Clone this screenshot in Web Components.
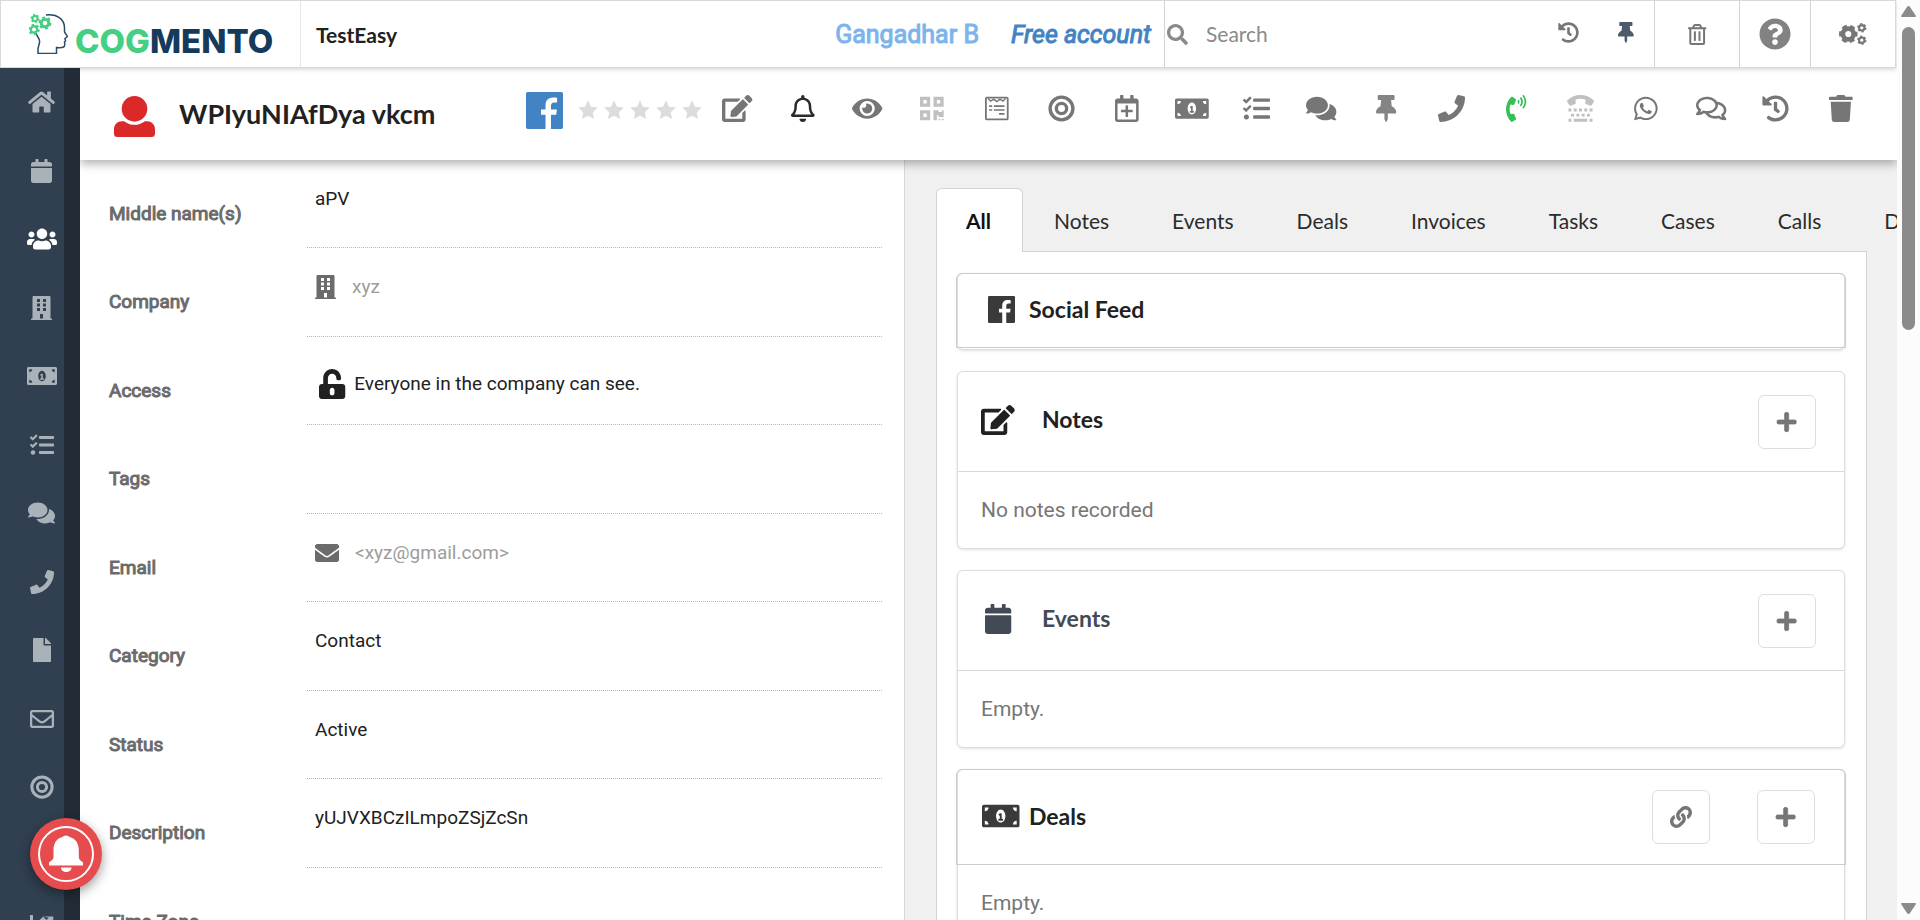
<!DOCTYPE html>
<html lang="en">
<head>
<meta charset="utf-8">
<title>Cogmento CRM</title>
<style>
html, body { margin: 0; height: 100%; overflow: hidden; }
body { font-family: Lato, "Noto Sans", sans-serif; font-size: 21px; color: #212121; background: #fff; }
</style>
</head>
<body>
<crm-app></crm-app>

<script>
const ICONS = {
  home: [576, '<path d="M280.37 148.26L96 300.11V464a16 16 0 0 0 16 16l112.06-.29a16 16 0 0 0 15.92-16V368a16 16 0 0 1 16-16h64a16 16 0 0 1 16 16v95.64a16 16 0 0 0 16 16.05L464 480a16 16 0 0 0 16-16V300L295.67 148.26a12.19 12.19 0 0 0-15.3 0zM571.6 251.47L488 182.56V44.05a12 12 0 0 0-12-12h-56a12 12 0 0 0-12 12v72.61L318.47 43a48 48 0 0 0-61 0L4.34 251.47a12 12 0 0 0-1.6 16.9l25.5 31A12 12 0 0 0 45.15 301l235.22-193.74a12.19 12.19 0 0 1 15.3 0L530.9 301a12 12 0 0 0 16.9-1.6l25.5-31a12 12 0 0 0-1.7-16.93z"/>'],
  calendar: [448, '<path d="M12 192h424c6.600 0 12 5.400 12 12v260c0 26.500-21.500 48-48 48H48c-26.500 0-48-21.500-48-48V204c0-6.600 5.400-12 12-12zm436-44v-36c0-26.500-21.500-48-48-48h-48V12c0-6.600-5.400-12-12-12h-40c-6.600 0-12 5.400-12 12v52H160V12c0-6.600-5.400-12-12-12h-40c-6.600 0-12 5.400-12 12v52H48C21.500 64 0 85.500 0 112v36c0 6.600 5.400 12 12 12h424c6.600 0 12-5.400 12-12z"/>'],
  users: [640, '<path d="M96 224c35.3 0 64-28.7 64-64s-28.7-64-64-64-64 28.7-64 64 28.7 64 64 64zm448 0c35.3 0 64-28.7 64-64s-28.7-64-64-64-64 28.7-64 64 28.7 64 64 64zm32 32h-64c-17.6 0-33.5 7.1-45.1 18.6 40.3 22.1 68.9 62 75.1 109.4h66c17.7 0 32-14.3 32-32v-32c0-35.3-28.7-64-64-64zm-256 0c61.9 0 112-50.1 112-112S381.9 32 320 32 208 82.1 208 144s50.1 112 112 112zm76.8 32h-8.3c-20.8 10-43.9 16-68.5 16s-47.6-6-68.5-16h-8.3C179.600 288 128 339.600 128 403.200V432c0 26.500 21.500 48 48 48h288c26.500 0 48-21.500 48-48v-28.800c0-63.600-51.600-115.200-115.200-115.200zm-223.700-13.400C161.500 263.100 145.600 256 128 256H64c-35.300 0-64 28.700-64 64v32c0 17.700 14.300 32 32 32h65.900c6.300-47.400 34.900-87.300 75.200-109.400z"/>'],
  building: [448, '<path fill-rule="evenodd" d="M436 480h-20V24c0-13-11-24-24-24H56C43 0 32 11 32 24v456H12c-7 0-12 5-12 12v20h448v-20c0-7-5-12-12-12zM128 64h64v64h-64zM256 64h64v64h-64zM128 160h64v64h-64zM256 160h64v64h-64zM128 256h64v64h-64zM256 256h64v64h-64zM192 384h64v96h-64z"/>'],
  money: [640, '<path d="M352 304h-16v-88c0-4.420-3.580-8-8-8h-13.580c-4.740 0-9.370 1.400-13.310 4.030l-15.330 10.220a7.994 7.994 0 0 0-2.220 11.090l8.880 13.310a7.994 7.994 0 0 0 11.090 2.220l.47-.31V304h-16c-4.420 0-8 3.580-8 8v16c0 4.420 3.580 8 8 8h64c4.420 0 8-3.580 8-8v-16c0-4.420-3.580-8-8-8zM608 64H32C14.330 64 0 78.330 0 96v320c0 17.670 14.330 32 32 32h576c17.670 0 32-14.330 32-32V96c0-17.670-14.330-32-32-32zM48 400v-64c35.350 0 64 28.650 64 64H48zm0-224v-64h64c0 35.350-28.650 64-64 64zm272 192c-44.190 0-80-50.150-80-112 0-61.860 35.820-112 80-112s80 50.130 80 112c0 61.870-35.830 112-80 112zm272 32h-64c0-35.350 28.650-64 64-64v64zm0-224c-35.350 0-64-28.650-64-64h64v64z"/>'],
  tasks: [512, '<path d="M139.61 35.500a12 12 0 0 0-17 0L58.930 98.810l-22.700-22.120a12 12 0 0 0-17 0L3.530 92.410a12 12 0 0 0 0 17l47.590 47.400a12.780 12.780 0 0 0 17.610 0l15.590-15.620L156.520 69a12.090 12.090 0 0 0 .09-17zm0 159.190a12 12 0 0 0-17 0l-63.680 63.720-22.700-22.100a12 12 0 0 0-17 0L3.530 252a12 12 0 0 0 0 17L51 316.500a12.770 12.770 0 0 0 17.600 0l15.700-15.690 72.200-72.220a12 12 0 0 0 .09-16.900zM64 368c-26.490 0-48.590 21.500-48.590 48S37.530 464 64 464a48 48 0 0 0 0-96zm432 16H208a16 16 0 0 0-16 16v32a16 16 0 0 0 16 16h288a16 16 0 0 0 16-16v-32a16 16 0 0 0-16-16zm0-320H208a16 16 0 0 0-16 16v32a16 16 0 0 0 16 16h288a16 16 0 0 0 16-16V80a16 16 0 0 0-16-16zm0 160H208a16 16 0 0 0-16 16v32a16 16 0 0 0 16 16h288a16 16 0 0 0 16-16v-32a16 16 0 0 0-16-16z"/>'],
  comments: [576, '<path d="M416 192c0-88.400-93.100-160-208-160S0 103.600 0 192c0 34.300 14.100 65.900 38 92-13.400 30.200-35.500 54.200-35.800 54.500-2.200 2.300-2.800 5.700-1.500 8.700S4.800 352 8 352c36.600 0 66.900-12.300 88.700-25 32.200 15.700 70.300 25 111.300 25 114.900 0 208-71.600 208-160zm122 220c23.900-26 38-57.700 38-92 0-66.900-53.500-124.200-129.300-148.100.9 6.600 1.300 13.300 1.300 20.100 0 105.900-107.700 192-240 192-10.800 0-21.300-.8-31.700-1.900C207.800 439.600 281.800 480 368 480c41 0 79.100-9.200 111.300-25 21.800 12.700 52.100 25 88.700 25 3.200 0 6.100-1.900 7.300-4.800 1.300-2.900.7-6.300-1.500-8.700-.3-.3-22.400-24.200-35.800-54.500z"/>'],
  commentsOutline: [576, '<path d="M532 386.200c27.500-27.100 44-61.100 44-98.200 0-80-76.500-146.100-176.200-157.900C368.300 72.500 294.300 32 208 32 93.100 32 0 103.600 0 192c0 37 16.500 71 44 98.200-15.300 30.700-37.300 54.500-37.700 54.900-6.300 6.700-8.100 16.500-4.400 25 3.600 8.500 12 14 21.200 14 53.500 0 96.700-20.200 125.200-38.800 9.200 2.100 18.700 3.700 28.400 4.900C208.100 407.600 281.800 448 368 448c20.800 0 40.800-2.400 59.800-6.800C456.300 459.700 499.400 480 553 480c9.200 0 17.500-5.500 21.200-14 3.600-8.500 1.900-18.300-4.400-25-.4-.3-22.500-24.100-37.800-54.800zm-392.800-92.300L122.100 305c-14.100 9.100-28.500 16.300-43.100 21.400 2.700-4.700 5.400-9.700 8-14.800l15.500-31.100L77.700 256C64.200 242.600 48 220.700 48 192c0-60.700 73.300-112 160-112s160 51.300 160 112-73.300 112-160 112c-16.500 0-33-1.900-49-5.600l-19.800-4.500zM498.300 352l-24.700 24.400 15.500 31.100c2.600 5.100 5.300 10.100 8 14.800-14.600-5.100-29-12.300-43.100-21.400l-17.100-11.100-19.900 4.600c-16 3.700-32.500 5.600-49 5.600-54 0-102.200-20.100-131.300-49.700C338 339.500 416 272.900 416 192c0-3.400-.4-6.700-.7-10C479.700 196.500 528 238.800 528 288c0 28.700-16.200 50.600-29.700 64z"/>'],
  phone: [512, '<path d="M493.400 24.600l-104-24c-11.300-2.600-22.900 3.300-27.500 13.900l-48 112c-4.200 9.800-1.400 21.300 6.900 28l60.600 49.600c-36 76.700-98.900 140.500-177.200 177.200l-49.600-60.600c-6.800-8.300-18.200-11.100-28-6.900l-112 48C3.900 366.500-2 378.100.6 389.400l24 104C27.100 504.200 36.700 512 48 512c256.100 0 464-207.500 464-464 0-11.200-7.700-20.900-18.600-23.400z"/>'],
  file: [384, '<path d="M224 136V0H24C10.700 0 0 10.700 0 24v464c0 13.300 10.700 24 24 24h336c13.300 0 24-10.700 24-24V160H248c-13.200 0-24-10.800-24-24zm160-14.100v6.100H256V0h6.100c6.400 0 12.500 2.500 17 7l97.900 98c4.500 4.500 7 10.600 7 16.900z"/>'],
  envelopeOutline: [512, '<path d="M464 64H48C21.490 64 0 85.490 0 112v288c0 26.510 21.490 48 48 48h416c26.510 0 48-21.490 48-48V112c0-26.510-21.490-48-48-48zm0 48v40.805c-22.422 18.259-58.168 46.651-134.587 106.490-16.841 13.247-50.201 45.072-73.413 44.701-23.208.375-56.579-31.459-73.413-44.701C106.180 199.465 70.425 171.067 48 152.805V112h416zM48 400V214.398c22.914 18.251 55.409 43.862 104.938 82.646 21.857 17.205 60.134 55.186 103.062 54.955 42.717.231 80.509-37.199 103.053-54.947 49.528-38.783 82.032-64.401 104.947-82.653V400H48z"/>'],
  envelope: [512, '<path d="M502.300 190.800c3.900-3.100 9.700-.2 9.700 4.700V400c0 26.500-21.500 48-48 48H48c-26.500 0-48-21.500-48-48V195.600c0-5 5.700-7.800 9.700-4.700 22.400 17.400 52.100 39.500 154.100 113.600 21.100 15.400 56.700 47.800 92.200 47.600 35.700.3 72-32.800 92.300-47.600 102-74.100 131.600-96.300 154-113.700zM256 320c23.200.4 56.600-29.200 73.400-41.400 132.700-96.300 142.800-104.700 173.400-128.700 5.800-4.500 9.200-11.500 9.200-18.900v-19c0-26.500-21.500-48-48-48H48c-26.500 0-48 21.500-48 48v19c0 7.400 3.400 14.300 9.200 18.900 30.600 23.900 40.700 32.400 173.400 128.700 16.800 12.200 50.200 41.800 73.400 41.400z"/>'],
  target: [512, '<g fill="none" stroke="currentColor" stroke-width="64"><circle cx="256" cy="256" r="216"/><circle cx="256" cy="256" r="98"/></g>'],
  chart: [512, '<path d="M0 64h64v320h448v64H0zM288 96h208v128l-56-56-88 88-72-72-80 80-44-44 124-124 72 72 44-44z"/>'],
  edit: [576, '<path d="M402.600 83.200l90.200 90.200c3.800 3.800 3.800 10 0 13.800L274.400 405.600l-92.800 10.300c-12.400 1.400-22.900-9.100-21.500-21.500l10.300-92.800L388.800 83.200c3.800-3.800 10-3.800 13.800 0zm162-22.900l-48.800-48.800c-15.200-15.200-39.900-15.200-55.200 0l-35.400 35.400c-3.800 3.800-3.800 10 0 13.800l90.200 90.200c3.800 3.800 10 3.800 13.800 0l35.400-35.400c15.200-15.300 15.200-40 0-55.200zM384 346.200V448H64V128h229.800c3.200 0 6.200-1.300 8.500-3.500l40-40c7.600-7.600 2.200-20.500-8.500-20.500H48C21.500 64 0 85.500 0 112v352c0 26.500 21.500 48 48 48h352c26.500 0 48-21.500 48-48V306.200c0-10.700-12.900-16-20.500-8.500l-40 40c-2.200 2.300-3.500 5.300-3.500 8.500z"/>'],
  bell: [448, '<path d="M439.390 362.290c-19.320-20.760-55.470-51.990-55.470-154.290 0-77.700-54.480-139.900-127.940-155.160V32c0-17.670-14.320-32-31.980-32s-31.980 14.330-31.980 32v20.840C118.560 68.100 64.080 130.300 64.080 208c0 102.300-36.150 133.530-55.470 154.290-6 6.450-8.660 14.160-8.610 21.710.11 16.400 12.980 32 32.100 32h383.800c19.120 0 32-15.600 32.100-32 .05-7.550-2.610-15.270-8.610-21.710zM67.530 368c21.220-27.970 44.420-74.330 44.530-159.420 0-.2-.06-.38-.06-.58 0-61.860 50.140-112 112-112s112 50.140 112 112c0 .2-.06.38-.06.58.11 85.100 23.310 131.460 44.530 159.420H67.530zM224 512c35.320 0 63.970-28.650 63.970-64H160.030c0 35.350 28.650 64 63.970 64z"/>'],
  eye: [576, '<path d="M572.520 241.400C518.290 135.590 410.930 64 288 64S57.680 135.640 3.480 241.410a32.350 32.350 0 0 0 0 29.190C57.710 376.410 165.070 448 288 448s230.320-71.640 284.520-177.410a32.350 32.350 0 0 0 0-29.190zM288 400a144 144 0 1 1 144-144 143.930 143.930 0 0 1-144 144zm0-240a95.310 95.310 0 0 0-25.310 3.790 47.850 47.850 0 0 1-66.900 66.900A95.780 95.780 0 1 0 288 160z"/>'],
  qrcode: [448, '<path d="M0 224h192V32H0v192zM64 96h64v64H64V96zm192-64v192h192V32H256zm128 128h-64V96h64v64zM0 480h192V288H0v192zm64-128h64v64H64v-64zm352-64h32v128h-96v-32h-32v96h-64V288h96v32h64v-32zm0 160h32v32h-32v-32zm-64 0h32v32h-32v-32z"/>'],
  invoice: [448, '<g fill="none" stroke="currentColor"><rect x="17" y="49" width="414" height="414" rx="18" stroke-width="34"/><path d="M60 66l46 50 59-38 59 48 59-48 59 38 46-50" stroke-width="26"/><path d="M78 212h58M168 212h202M78 284h58M168 284h202M266 358h104" stroke-width="32"/></g>'],
  calendarPlus: [448, '<path d="M336 292v24c0 6.600-5.400 12-12 12h-76v76c0 6.600-5.400 12-12 12h-24c-6.600 0-12-5.400-12-12v-76h-76c-6.600 0-12-5.400-12-12v-24c0-6.600 5.400-12 12-12h76v-76c0-6.600 5.400-12 12-12h24c6.600 0 12 5.400 12 12v76h76c6.600 0 12 5.400 12 12zm112-180v352c0 26.500-21.500 48-48 48H48c-26.500 0-48-21.500-48-48V112c0-26.500 21.500-48 48-48h48V12c0-6.600 5.400-12 12-12h40c6.600 0 12 5.400 12 12v52h128V12c0-6.600 5.400-12 12-12h40c6.600 0 12 5.400 12 12v52h48c26.500 0 48 21.500 48 48zm-48 346V160H48v298c0 3.300 2.700 6 6 6h340c3.300 0 6-2.700 6-6z"/>'],
  pin: [384, '<path d="M298.028 214.267L285.793 96H328c13.255 0 24-10.745 24-24V24c0-13.255-10.745-24-24-24H56C42.745 0 32 10.745 32 24v48c0 13.255 10.745 24 24 24h42.207L85.972 214.267C37.465 236.820 0 277.261 0 328c0 13.255 10.745 24 24 24h136v104.007c0 1.242.289 2.467.845 3.578l24 48c2.941 5.882 11.364 5.893 14.311 0l24-48a8.008 8.008 0 0 0 .845-3.578V352h136c13.255 0 24-10.745 24-24-.001-51.183-37.983-91.420-85.973-113.733z"/>'],
  history: [512, '<path d="M504 255.531c.253 136.640-111.180 248.372-247.820 248.468-59.015.042-113.223-20.530-155.822-54.911-11.077-8.940-11.905-25.541-1.839-35.607l11.267-11.267c8.609-8.609 22.353-9.551 31.891-1.984C173.062 425.135 212.781 440 256 440c101.705 0 184-82.311 184-184 0-101.705-82.311-184-184-184-48.814 0-93.149 18.969-126.068 49.932l50.754 50.754c10.080 10.080 2.941 27.314-11.313 27.314H24c-8.837 0-16-7.163-16-16V38.627c0-14.254 17.234-21.393 27.314-11.314l49.372 49.372C129.209 34.136 189.552 8 256 8c136.810 0 247.747 110.780 248 247.531zm-180.912 78.784l9.823-12.630c8.138-10.463 6.253-25.542-4.210-33.679L288 256.349V152c0-13.255-10.745-24-24-24h-16c-13.255 0-24 10.745-24 24v135.651l65.409 50.874c10.463 8.137 25.541 6.253 33.679-4.210z"/>'],
  trash: [448, '<path d="M432 32H312l-9.400-18.700A24 24 0 0 0 281.100 0H166.800a23.720 23.720 0 0 0-21.400 13.300L136 32H16A16 16 0 0 0 0 48v32a16 16 0 0 0 16 16h416a16 16 0 0 0 16-16V48a16 16 0 0 0-16-16zM53.200 467a48 48 0 0 0 47.900 45h245.800a48 48 0 0 0 47.900-45L416 128H32z"/>'],
  trashOutline: [448, '<path d="M268 416h24a12 12 0 0 0 12-12V188a12 12 0 0 0-12-12h-24a12 12 0 0 0-12 12v216a12 12 0 0 0 12 12zM432 80h-82.410l-34-56.700A48 48 0 0 0 274.410 0H173.590a48 48 0 0 0-41.160 23.300L98.410 80H16A16 16 0 0 0 0 96v16a16 16 0 0 0 16 16h16v336a48 48 0 0 0 48 48h288a48 48 0 0 0 48-48V128h16a16 16 0 0 0 16-16V96a16 16 0 0 0-16-16zM171.840 50.910A6 6 0 0 1 177 48h94a6 6 0 0 1 5.150 2.910L293.610 80H154.390zM368 464H80V128h288zm-212-48h24a12 12 0 0 0 12-12V188a12 12 0 0 0-12-12h-24a12 12 0 0 0-12 12v216a12 12 0 0 0 12 12z"/>'],
  help: [512, '<path d="M504 256c0 136.997-111.043 248-248 248S8 392.997 8 256C8 119.083 119.043 8 256 8s248 111.083 248 248zM262.655 90c-54.497 0-89.255 22.957-116.549 63.758-3.536 5.286-2.353 12.415 2.715 16.258l34.699 26.310c5.205 3.947 12.621 3.008 16.665-2.122 17.864-22.658 30.113-35.797 57.303-35.797 20.429 0 45.698 13.148 45.698 32.958 0 14.976-12.363 22.667-32.534 33.976C247.128 238.528 216 254.941 216 296v4c0 6.627 5.373 12 12 12h56c6.627 0 12-5.373 12-12v-1.333c0-28.462 83.186-29.647 83.186-106.667 0-58.002-60.165-102-116.531-102zM256 338c-25.365 0-46 20.635-46 46 0 25.364 20.635 46 46 46s46-20.636 46-46c0-25.365-20.635-46-46-46z"/>'],
  cogs: [640, '<g fill="none" stroke="currentColor"><circle cx="216" cy="256" r="126" stroke-width="108"/><circle cx="216" cy="256" r="186" stroke-width="60" pathLength="12" stroke-dasharray="1.200 .8" stroke-dashoffset=".6"/><circle cx="530" cy="112" r="62" stroke-width="48"/><circle cx="530" cy="112" r="92" stroke-width="36" pathLength="12" stroke-dasharray="1 1"/><circle cx="530" cy="400" r="62" stroke-width="48"/><circle cx="530" cy="400" r="92" stroke-width="36" pathLength="12" stroke-dasharray="1 1"/></g>'],
  search: [512, '<path d="M505 442.700L405.300 343c-4.500-4.500-10.600-7-17-7H372c27.600-35.300 44-79.700 44-128C416 93.100 322.900 0 208 0S0 93.100 0 208s93.100 208 208 208c48.300 0 92.700-16.400 128-44v16.300c0 6.400 2.500 12.500 7 17l99.700 99.700c9.400 9.400 24.600 9.400 33.900 0l28.300-28.300c9.400-9.400 9.400-24.600.1-34zM208 336c-70.700 0-128-57.200-128-128 0-70.700 57.200-128 128-128 70.700 0 128 57.200 128 128 0 70.700-57.200 128-128 128z"/>'],
  user: [512, '<circle cx="256" cy="160" r="160"/><path d="M44 512c-30 0-44-14-44-44v-54c0-56 44-100 100-100h26c78 60 182 60 260 0h26c56 0 100 44 100 100v54c0 30-14 44-44 44z"/>'],
  unlock: [448, '<path d="M400 256H152V152.900c0-39.600 31.700-72.500 71.300-72.900 40-.4 72.700 32.100 72.700 72v16c0 13.300 10.700 24 24 24h32c13.300 0 24-10.700 24-24v-16C376 68 307.500-.3 223.500 0 139.500.3 72 69.500 72 153.500V256H48c-26.500 0-48 21.500-48 48v160c0 26.500 21.500 48 48 48h352c26.500 0 48-21.500 48-48V304c0-26.500-21.500-48-48-48zM264 408c0 22.100-17.900 40-40 40s-40-17.900-40-40v-48c0-22.100 17.900-40 40-40s40 17.900 40 40v48z"/>'],
  star: [512, '<path d="M256 8l76 162 176 22-130 120 34 176-156-88-156 88 34-176L4 192l176-22z"/>'],
  facebook: [512, '<path fill-rule="evenodd" d="M24 0h464a24 24 0 0 1 24 24v464a24 24 0 0 1-24 24H24a24 24 0 0 1-24-24V24A24 24 0 0 1 24 0zM270 512V314h-62v-72h62v-58c0-70 42-108 106-108 26 0 48 2 54 4v64h-38c-36 0-46 18-46 46v52h82l-10 72h-72v198z"/>'],
  phoneVolume: [384, '<path d="M97.333 506.966c-129.874-129.874-129.681-340.252 0-469.933 5.698-5.698 14.527-6.632 21.263-2.422l64.817 40.513a17.187 17.187 0 0 1 6.849 20.958l-32.408 81.021a17.188 17.188 0 0 1-17.669 10.719l-55.810-5.580c-21.051 58.261-20.612 122.471 0 179.515l55.811-5.581a17.188 17.188 0 0 1 17.669 10.719l32.408 81.022a17.188 17.188 0 0 1-6.849 20.958l-64.817 40.513a17.190 17.190 0 0 1-21.264-2.422zM247.126 95.473c11.832 20.047 11.832 45.008 0 65.055-3.950 6.693-13.108 7.959-18.718 2.581l-5.975-5.726c-3.911-3.748-4.793-9.622-2.261-14.410a32.063 32.063 0 0 0 0-29.945c-2.533-4.788-1.650-10.662 2.261-14.410l5.975-5.726c5.610-5.378 14.768-4.112 18.718 2.581zm91.787-91.187c60.140 71.604 60.092 175.882 0 247.428-4.474 5.327-12.530 5.746-17.552.933l-5.798-5.557c-4.560-4.371-4.977-11.529-.93-16.379 49.687-59.538 49.646-145.933 0-205.422-4.047-4.850-3.631-12.008.93-16.379l5.798-5.557c5.022-4.813 13.078-4.394 17.552.933zm-45.972 44.941c36.050 46.322 36.108 111.149 0 157.546-4.390 5.641-12.697 6.251-17.856 1.304l-5.818-5.579c-4.400-4.219-4.998-11.095-1.285-15.931 26.536-34.564 26.534-82.572 0-117.134-3.713-4.836-3.115-11.711 1.285-15.931l5.818-5.579c5.159-4.947 13.466-4.337 17.856 1.304z"/>'],
  tty: [512, '<path d="M5.370 103.822c138.532-138.532 362.936-138.326 501.262 0 6.078 6.078 7.074 15.496 2.583 22.681l-43.214 69.138a18.332 18.332 0 0 1-22.356 7.305l-86.422-34.569a18.335 18.335 0 0 1-11.434-18.846L351.741 90c-62.145-22.454-130.636-21.986-191.483 0l5.953 59.532a18.331 18.331 0 0 1-11.434 18.846l-86.423 34.568a18.334 18.334 0 0 1-22.356-7.305L2.787 126.502a18.333 18.333 0 0 1 2.583-22.680zM28 256h56v56H28zM128 256h56v56h-56zM228 256h56v56h-56zM328 256h56v56h-56zM428 256h56v56h-56zM78 354h56v56H78zM178 354h56v56h-56zM278 354h56v56h-56zM378 354h56v56h-56zM28 452h56v56H28zM128 452h256v56H128zM428 452h56v56h-56z"/>'],
  whatsapp: [448, '<path d="M380.900 97.100C339 55.100 283.200 32 223.900 32c-122.400 0-222 99.600-222 222 0 39.100 10.200 77.300 29.600 111L0 480l117.700-30.900c32.400 17.700 68.900 27 106.100 27h.1c122.300 0 224.100-99.600 224.100-222 0-59.300-25.200-115-67.100-157zm-157 341.600c-33.200 0-65.700-8.900-94-25.700l-6.700-4-69.800 18.300L72 359.200l-4.400-7c-18.500-29.400-28.200-63.300-28.200-98.200 0-101.700 82.800-184.500 184.600-184.500 49.300 0 95.600 19.200 130.400 54.100 34.800 34.900 56.200 81.200 56.100 130.500 0 101.800-84.900 184.600-186.600 184.600zm101.200-138.200c-5.500-2.800-32.800-16.200-37.900-18-5.100-1.900-8.800-2.800-12.500 2.800-3.700 5.600-14.300 18-17.600 21.800-3.200 3.700-6.500 4.200-12 1.400-32.600-16.300-54-29.100-75.500-66-5.700-9.800 5.700-9.100 16.300-30.300 1.800-3.700.9-6.900-.5-9.700-1.400-2.800-12.500-30.100-17.100-41.200-4.500-10.800-9.100-9.300-12.500-9.500-3.200-.2-6.900-.2-10.600-.2-3.700 0-9.700 1.400-14.800 6.900-5.100 5.600-19.400 19-19.400 46.300 0 27.300 19.900 53.700 22.600 57.400 2.800 3.700 39.100 59.700 94.800 83.800 35.200 15.200 49 16.500 66.600 13.900 10.700-1.600 32.800-13.400 37.400-26.400 4.600-13 4.600-24.100 3.200-26.400-1.300-2.500-5-3.900-10.500-6.600z"/>'],
  link: [512, '<path d="M326.612 185.391c59.747 59.809 58.927 155.698.36 214.590-.11.12-.24.25-.36.37l-67.200 67.200c-59.270 59.270-155.699 59.262-214.960 0-59.270-59.260-59.270-155.700 0-214.960l37.106-37.106c9.840-9.840 26.786-3.300 27.294 10.606.648 17.722 3.826 35.527 9.690 52.721 1.986 5.822.567 12.262-3.783 16.612l-13.087 13.087c-28.026 28.026-28.905 73.660-1.155 101.960 28.024 28.579 74.086 28.749 102.325.51l67.200-67.190c28.191-28.191 28.073-73.757 0-101.830-3.701-3.694-7.429-6.564-10.341-8.569a16.037 16.037 0 0 1-6.947-12.606c-.396-10.567 3.348-21.456 11.698-29.806l21.054-21.055c5.521-5.521 14.182-6.199 20.584-1.731a152.482 152.482 0 0 1 20.522 17.197zM467.547 44.449c-59.261-59.262-155.690-59.270-214.960 0l-67.200 67.200c-.12.12-.25.25-.36.37-58.566 58.892-59.387 154.781.36 214.590a152.454 152.454 0 0 0 20.521 17.196c6.402 4.468 15.064 3.789 20.584-1.731l21.054-21.055c8.350-8.350 12.094-19.239 11.698-29.806a16.037 16.037 0 0 0-6.947-12.606c-2.912-2.005-6.640-4.875-10.341-8.569-28.073-28.073-28.191-73.639 0-101.830l67.200-67.190c28.239-28.239 74.300-28.069 102.325.51 27.750 28.300 26.872 73.934-1.155 101.960l-13.087 13.087c-4.350 4.350-5.769 10.790-3.783 16.612 5.864 17.194 9.042 34.999 9.690 52.721.509 13.906 17.454 20.446 27.294 10.606l37.106-37.106c59.271-59.259 59.271-155.699.001-214.959z"/>'],
  plus: [448, '<path d="M416 208H272V64c0-17.670-14.330-32-32-32h-32c-17.670 0-32 14.330-32 32v144H32c-17.670 0-32 14.330-32 32v32c0 17.670 14.330 32 32 32h144v144c0 17.670 14.330 32 32 32h32c17.670 0 32-14.330 32-32V304h144c17.670 0 32-14.330 32-32v-32c0-17.670-14.330-32-32-32z" stroke="currentColor" stroke-width="16"/>']
};

const define = (name, html) => customElements.define(name, class extends HTMLElement {
  constructor() {
    super();
    this.attachShadow({ mode: 'open' });
  }
  connectedCallback() {
    if (this.shadowRoot.childNodes.length) return;
    this.shadowRoot.innerHTML = typeof html === 'function' ? html(this) : html;
  }
});

const BUTTON_RESET = 'button{font:inherit;color:inherit;background:none;border:0;padding:0;margin:0;cursor:pointer}';

/* An icon sized by the font-size of its host: 1em is the full glyph height. */
define('crm-icon', el => {
  const [width, body] = ICONS[el.getAttribute('name')];
  return `<style>:host{display:inline-flex;flex:none;font-size:${el.getAttribute('size')}px}svg{display:block;height:1em;fill:currentColor;overflow:visible}</style>
  <svg viewBox="0 0 ${width} 512" width="${width / 512}em" aria-hidden="true">${body}</svg>`;
});

define('crm-logo', `<style>
:host{display:flex;height:100%}
a{display:flex;align-items:center;gap:7px;text-decoration:none}
svg{display:block;flex:none}
span{font:800 33px/40px Inter,sans-serif;color:#143a5c;padding-top:14px}
b{font-weight:800;color:#44cf83}
</style>
<a href="#"><svg width="39" height="40" viewBox="0 0 39 40" fill="none">
<path d="M17 1c11-1.500 18.500 4 18.500 13v4l3 4.500-2.500 2 .5 2.500-1 1 .3 2.500c0 3-2 3.500-8.300 3v6H9v-5l1.500-6c1-4-3-6-4.500-11" stroke="#2a4c6b" stroke-width="1.500"/>
<g stroke="#44cf83"><circle cx="6" cy="4.500" r="2.500" stroke-width="2"/><circle cx="6" cy="4.500" r="3.800" stroke-width="1.500" pathLength="12" stroke-dasharray="1 1"/>
<circle cx="16" cy="9" r="3.800" stroke-width="3"/><circle cx="16" cy="9" r="5.500" stroke-width="2" pathLength="12" stroke-dasharray="1 1"/>
<circle cx="5" cy="15.500" r="3.200" stroke-width="2.400"/><circle cx="5" cy="15.500" r="4.800" stroke-width="2" pathLength="12" stroke-dasharray="1 1"/></g></svg>
<span><b>COG</b>MENTO</span></a>`);

define('crm-topbar', `<style>${BUTTON_RESET}
:host{display:flex;box-sizing:border-box;height:68px;border:1px solid #d9d9d9;background:#fff;box-shadow:0 1px 5px rgba(0,0,0,.2);position:relative;z-index:3;color:#767676}
.brand{box-sizing:border-box;width:300px;padding-left:28px;border-right:1px solid #e6e6e6}
.workspace{flex:1;display:flex;align-items:center;padding-left:15px;font-weight:700;color:#212121}
.account{display:flex;align-items:center;gap:32px;padding:2px 13px 0 0;font:400 25px/32px Roboto,sans-serif;-webkit-text-stroke:1px}
.account a{text-decoration:none;color:#4183c4;font-style:italic}
.account .name{color:#7cb4ec;font-style:normal}
form{flex:0 1 490px;display:flex;align-items:center;border-left:1px solid #d4d4d4;padding:0 20px 0 2px;box-sizing:border-box;margin:0}
input{flex:1;min-width:0;border:0;outline:0;background:none;font:400 21px/24px Lato,sans-serif;padding:0 18px;color:#212121}
input::placeholder{color:#8a8a8a;opacity:1}
.quick{display:flex;gap:39px}
.cell{display:flex;align-items:center;justify-content:center;border-left:1px solid #d4d4d4;box-sizing:border-box}
</style>
<div class="brand"><crm-logo></crm-logo></div>
<div class="workspace">TestEasy</div>
<div class="account"><a class="name" href="#">Gangadhar B</a><a href="#">Free account</a></div>
<form role="search"><crm-icon name="search" size="21" style="color:#8a8a8a"></crm-icon><input type="search" placeholder="Search" aria-label="Search">
<div class="quick"><button type="button" aria-label="History"><crm-icon name="history" size="21"></crm-icon></button><button type="button" aria-label="Pinned"><crm-icon name="pin" size="21" style="color:#4d5b6b"></crm-icon></button></div></form>
<button class="cell" style="width:85px" aria-label="Trash"><crm-icon name="trashOutline" size="21"></crm-icon></button>
<button class="cell" style="width:71px;color:#828282" aria-label="Help"><crm-icon name="help" size="32"></crm-icon></button>
<button class="cell" style="width:85px" aria-label="Settings"><crm-icon name="cogs" size="22"></crm-icon></button>`);

define('crm-sidebar', el => {
  const items = [['home', 'Home'], ['calendar', 'Calendar'], ['users', 'Contacts'], ['building', 'Companies'], ['money', 'Deals'], ['tasks', 'Tasks'], ['comments', 'Cases'], ['phone', 'Calls'], ['file', 'Documents'], ['envelopeOutline', 'Email'], ['target', 'Campaigns'], ['file', 'Forms'], ['chart', 'Reports']];
  return `<style>${BUTTON_RESET}
:host{display:block;position:relative;box-sizing:border-box;width:80px;background:#304050;border-right:16px solid #222c36;color:#aab2b9}
nav{display:grid;grid-template-rows:repeat(14,1fr);height:959px;padding-left:19px}
a{display:flex;align-items:center;justify-content:center;color:inherit}
a[aria-current]{color:#fff}
.alert{position:absolute;left:30px;top:750px;width:72px;height:72px;border-radius:50%;background:#e64b4d;box-shadow:0 4px 12px rgba(0,0,0,.4);color:#fff;display:grid;place-items:center}
.alert svg{display:block}
</style><nav>${items.map(([icon, label]) => `<a href="#" aria-label="${label}"${icon === 'users' ? ' aria-current="page"' : ''}><crm-icon name="${icon}" size="24"></crm-icon></a>`).join('')}</nav>
<button class="alert" aria-label="Notifications"><svg width="72" height="72" viewBox="0 0 72 72"><circle cx="36" cy="36" r="27" fill="none" stroke="#fff" stroke-width="2"/><path fill="#fff" d="M36 17.500c1.500 0 3 .8 3.500 1.500C46 20.500 48.800 26 48.800 32v7c0 2.500 1.200 3 4.200 5.500v3H19v-3c3-2.500 4.500-3 4.500-5.500v-7c0-6 2.500-11.500 9-13 .5-.7 2-1.500 3.500-1.500zM31 49.500h10.500c0 6-10.500 6-10.500 0z"/></svg></button>`;
});

define('crm-record-header', el => {
  const actions = [['edit', 'Edit'], ['bell', 'Remind', '#2b2b2b'], ['eye', 'Watch'], ['qrcode', 'QR code', '#c0c0c0'], ['invoice', 'Invoice'], ['target', 'Campaign'], ['calendarPlus', 'Add event'], ['money', 'Add deal'], ['tasks', 'Add task'], ['comments', 'Add case'], ['pin', 'Pin', '#848484'], ['phone', 'Call'], ['phoneVolume', 'Dial', '#35bf57'], ['tty', 'Text phone', '#c0c0c0'], ['whatsapp', 'WhatsApp'], ['commentsOutline', 'SMS'], ['history', 'History'], ['trash', 'Delete']];
  return `<style>${BUTTON_RESET}
:host{display:flex;align-items:center;box-sizing:border-box;height:92px;padding:0 24px 0 34px;background:#fff;box-shadow:0 3px 10px rgba(0,0,0,.35);position:relative;z-index:2}
h1{margin:0 auto 0 24px;font-size:27px;line-height:32px;font-weight:700}
.stars{display:flex;gap:6px;margin:0 3px 0 15px;color:#dcdcdc}
.actions{flex:0 1 1168px;display:grid;grid-template-columns:repeat(18,1fr);color:#767676;height:100%;padding-bottom:12px;box-sizing:border-box}
.actions button{display:grid;place-items:center}
.social{color:#4183c4;display:flex}
.rating{display:flex;align-items:center;padding-bottom:8px}
</style>
<crm-icon name="user" size="41" style="color:#db2828;padding-top:4px"></crm-icon>
<h1><slot></slot></h1>
<div class="rating"><a class="social" href="#" aria-label="Facebook"><crm-icon name="facebook" size="37"></crm-icon></a>
<div class="stars" role="img" aria-label="0 of 5 stars">${'<crm-icon name="star" size="20"></crm-icon>'.repeat(5)}</div></div>
<div class="actions">${actions.map(([icon, label, color]) => `<button aria-label="${label}"${color ? ` style="color:${color}"` : ''}><crm-icon name="${icon}" size="27"></crm-icon></button>`).join('')}</div>`;
});

define('crm-field', el => `<style>
:host{display:flex;padding-right:22px;font:400 19px/24px Roboto,sans-serif}
.label{flex:0 0 198px;padding-top:42px;color:#6b6b6b;-webkit-text-stroke:1px}
.value{flex:1;display:flex;align-items:flex-start;border-bottom:1px dotted #b5b5b5;padding:23px 8px 0;color:#212121}
.line{display:flex;align-items:center;height:32px;gap:16px}
:host([muted]) .line{color:#9c9c9c}
:host([tall]) .line{height:48px;gap:9px;padding-left:4px}
</style><div class="label">${el.getAttribute('label')}</div><div class="value"><div class="line"><slot></slot></div></div>`);

define('crm-tabs', el => `<style>${BUTTON_RESET}
:host{display:flex;position:relative;z-index:1;margin-bottom:-1px;white-space:nowrap;overflow:visible}
button{flex:none;box-sizing:border-box;height:64px;padding:0 32px 0 30px;border:1px solid transparent;border-width:1px 0 0 1px;font-size:21px;line-height:28px;color:#2b2b2b}
button[aria-selected=true]{background:#fff;border-color:#d4d4d5;border-width:1px 1px 0;border-radius:6px 6px 0 0;font-weight:700;color:#111;padding:0 31px 0 29px}
</style>${el.getAttribute('items').split(',').map((t, i) => `<button role="tab" aria-selected="${i === 0}">${t}</button>`).join('')}`);

define('crm-card', `<style>
:host{display:block;box-sizing:border-box;border:1px solid #dcdcdd;border-radius:6px;background:#fff;box-shadow:0 1px 3px rgba(0,0,0,.12)}
header{display:flex;align-items:center;box-sizing:border-box;height:100px;padding:0 28px 0 23px;border-bottom:1px solid #d9d9da}
.icon{flex:0 0 34px;display:flex;justify-content:center;margin-right:27px;padding-bottom:3px}
h2{margin:0 auto 0 0;padding-bottom:5px;font-size:23px;line-height:28px;font-weight:700}
.actions{display:flex;gap:47px}
.body{display:flex;align-items:center;height:76px;padding-left:23px;font:400 21px/28px Roboto,sans-serif;color:#767676}
:host([attached]) header{margin:-1px -2px 0;height:96px;padding:0 30px 0 25px;border:1px solid #ccccce;border-radius:6px 6px 0 0}
:host([attached]) .icon{flex-basis:38px;margin-right:9px;padding-bottom:2px}
:host([attached]) h2{padding-bottom:3px}
:host([compact]) header{height:75px}
:host([compact]) .body{height:1px}
</style><header><div class="icon"><slot name="icon"></slot></div><h2><slot name="title"></slot></h2><div class="actions"><slot name="action"></slot></div></header>
<div class="body"><slot></slot></div>`);

define('crm-tool-button', el => `<style>${BUTTON_RESET}
:host{display:block}
button{display:grid;place-items:center;box-sizing:border-box;width:58px;height:54px;border:1px solid #dededf;border-radius:6px;color:#767676;background:#fff}
</style><button aria-label="${el.getAttribute('label')}"><crm-icon name="${el.getAttribute('icon')}" size="22"></crm-icon></button>`);

define('crm-scroll-rail', `<style>
:host{display:flex;flex-direction:column;align-items:center;box-sizing:border-box;width:23px;height:100%;padding:6px 4px;background:#fcfcfc}
svg{display:block;flex:none;fill:#8b8b8b}
.track{flex:1;width:13px;margin:10px 0}
.thumb{height:35%;border-radius:7px;background:#8b8b8b}
</style><svg width="15" height="11"><path d="M7.500 0Q8.500 0 9 1l6 9q0 1-1 1H1q-1 0-1-1l6-9q.5-1 1.500-1z"/></svg><div class="track"><div class="thumb"></div></div><svg width="15" height="11"><path d="M7.500 11Q8.500 11 9 10l6-9q0-1-1-1H1Q0 0 0 1l6 9q.5 1 1.500 1z"/></svg>`);

define('crm-app', `<style>
:host{display:grid;grid-template-columns:minmax(0,1fr) 23px;height:100vh;overflow:hidden}
.page{display:grid;grid-template-rows:auto minmax(0,1fr);height:100vh;overflow:hidden}
crm-topbar{margin-right:1px}
.body{display:grid;grid-template-columns:auto minmax(0,1fr);min-height:0}
crm-sidebar{z-index:4;min-height:0}
main{display:grid;grid-template-rows:auto minmax(0,1fr);min-width:0;min-height:0}
.split{display:grid;grid-template-columns:825fr 992fr;min-height:0;overflow:hidden}
.details{display:grid;grid-template-rows:repeat(9,1fr);height:796px;min-height:100%;padding-left:29px;border-right:1px solid #d8d8d8;background:#fff;box-sizing:border-box}
.related{background:#f0f0f0;padding:28px 30px 0 31px;min-width:0;overflow:hidden}
.panel{box-sizing:border-box;display:flex;flex-direction:column;gap:21px;border:1px solid #d4d4d5;background:#fff;padding:21px 21px 40px 20px}
.panel crm-icon{color:#212121}
.panel .slate{color:#414a55}
.panel .soft{color:#3a3a3a}
</style>
<div class="page">
<crm-topbar></crm-topbar>
<div class="body">
<crm-sidebar></crm-sidebar>
<main>
<crm-record-header>WPIyuNIAfDya vkcm</crm-record-header>
<div class="split">
<section class="details">
<crm-field label="Middle name(s)">aPV</crm-field>
<crm-field label="Company" muted><crm-icon name="building" size="24" style="color:#6b6b6b"></crm-icon>xyz</crm-field>
<crm-field label="Access" tall><crm-icon name="unlock" size="30"></crm-icon>Everyone in the company can see.</crm-field>
<crm-field label="Tags"></crm-field>
<crm-field label="Email" muted><crm-icon name="envelope" size="24" style="color:#6b6b6b"></crm-icon>&lt;xyz@gmail.com&gt;</crm-field>
<crm-field label="Category">Contact</crm-field>
<crm-field label="Status">Active</crm-field>
<crm-field label="Description">yUJVXBCzILmpoZSjZcSn</crm-field>
<crm-field label="Time Zone"></crm-field>
</section>
<section class="related">
<crm-tabs role="tablist" items="All,Notes,Events,Deals,Invoices,Tasks,Cases,Calls,Documents"></crm-tabs>
<div class="panel">
<crm-card attached compact><crm-icon class="soft" slot="icon" name="facebook" size="27"></crm-icon><span slot="title">Social Feed</span></crm-card>
<crm-card><crm-icon slot="icon" name="edit" size="30"></crm-icon><span slot="title">Notes</span><crm-tool-button slot="action" icon="plus" label="Add note"></crm-tool-button>No notes recorded</crm-card>
<crm-card><crm-icon class="slate" slot="icon" name="calendar" size="30"></crm-icon><span slot="title" class="slate">Events</span><crm-tool-button slot="action" icon="plus" label="Add event"></crm-tool-button>Empty.</crm-card>
<crm-card attached><crm-icon class="soft" slot="icon" name="money" size="30"></crm-icon><span slot="title">Deals</span><crm-tool-button slot="action" icon="link" label="Link deal"></crm-tool-button><crm-tool-button slot="action" icon="plus" label="Add deal"></crm-tool-button>Empty.</crm-card>
</div>
</section>
</div>
</main>
</div>
</div>
<crm-scroll-rail></crm-scroll-rail>`);
</script>
</body>
</html>
